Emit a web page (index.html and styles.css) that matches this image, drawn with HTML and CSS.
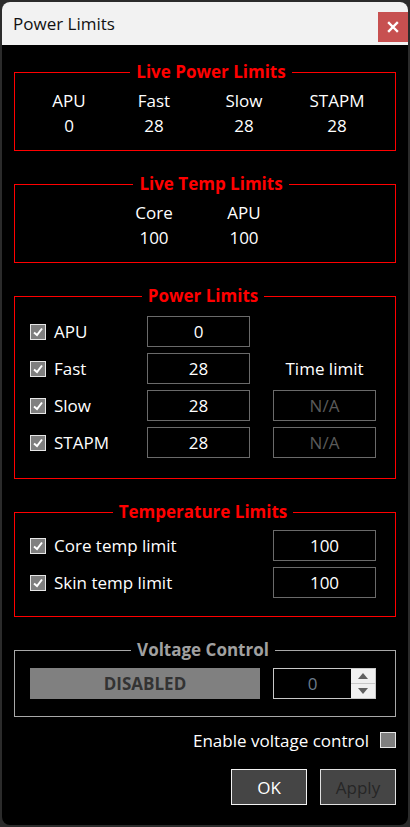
FILE: index.html
```html
<!DOCTYPE html>
<html lang="en">
<head>
  <meta charset="UTF-8" />
  <title>Power Limits</title>
  <meta name="viewport" content="width=device-width, initial-scale=1.0" />
  <link rel="stylesheet" href="styles.css">
</head>
<body>
  <div class="window">
    <div class="titlebar">
      <span class="title">Power Limits</span>
      <button class="close-btn" aria-label="Close">
        <svg width="12" height="12" viewBox="0 0 12 12">
          <path d="M2 2 L10 10 M10 2 L2 10" stroke="#fff" stroke-width="2.4" stroke-linecap="square" fill="none"/>
        </svg>
      </button>
    </div>

    <div class="content">
      <fieldset class="group live">
        <legend>Live Power Limits</legend>
        <div class="live-grid">
          <span>APU</span><span>Fast</span><span>Slow</span><span>STAPM</span>
          <span>0</span><span>28</span><span>28</span><span>28</span>
        </div>
      </fieldset>

      <fieldset class="group live">
        <legend>Live Temp Limits</legend>
        <div class="live-grid">
          <span class="col2">Core</span><span>APU</span>
          <span class="col2">100</span><span>100</span>
        </div>
      </fieldset>

      <fieldset class="group limits">
        <legend>Power Limits</legend>
        <div class="limits-grid">
          <label class="check"><span class="box"><svg width="14" height="14" viewBox="0 0 14 14"><path d="M3 7.5 L6 10 L11 3.5" stroke="#fff" stroke-width="2" fill="none"/></svg></span>APU</label>
          <div class="field">0</div>
          <div></div>

          <label class="check"><span class="box"><svg width="14" height="14" viewBox="0 0 14 14"><path d="M3 7.5 L6 10 L11 3.5" stroke="#fff" stroke-width="2" fill="none"/></svg></span>Fast</label>
          <div class="field">28</div>
          <div class="time-label">Time limit</div>

          <label class="check"><span class="box"><svg width="14" height="14" viewBox="0 0 14 14"><path d="M3 7.5 L6 10 L11 3.5" stroke="#fff" stroke-width="2" fill="none"/></svg></span>Slow</label>
          <div class="field">28</div>
          <div class="field off">N/A</div>

          <label class="check"><span class="box"><svg width="14" height="14" viewBox="0 0 14 14"><path d="M3 7.5 L6 10 L11 3.5" stroke="#fff" stroke-width="2" fill="none"/></svg></span>STAPM</label>
          <div class="field">28</div>
          <div class="field off">N/A</div>
        </div>
      </fieldset>

      <fieldset class="group temps">
        <legend>Temperature Limits</legend>
        <div class="temps-grid">
          <label class="check"><span class="box"><svg width="14" height="14" viewBox="0 0 14 14"><path d="M3 7.5 L6 10 L11 3.5" stroke="#fff" stroke-width="2" fill="none"/></svg></span>Core temp limit</label>
          <div class="field">100</div>
          <label class="check"><span class="box"><svg width="14" height="14" viewBox="0 0 14 14"><path d="M3 7.5 L6 10 L11 3.5" stroke="#fff" stroke-width="2" fill="none"/></svg></span>Skin temp limit</label>
          <div class="field">100</div>
        </div>
      </fieldset>

      <fieldset class="group voltage">
        <legend>Voltage Control</legend>
        <div class="voltage-row">
          <div class="disabled-bar">DISABLED</div>
          <div class="spin">
            <span class="spin-value">0</span>
            <span class="spin-btns">
              <span class="spin-btn"><svg width="10" height="6" viewBox="0 0 10 6"><path d="M0 6 L5 0 L10 6 Z" fill="#606060"/></svg></span>
              <span class="spin-btn"><svg width="10" height="6" viewBox="0 0 10 6"><path d="M0 0 L10 0 L5 6 Z" fill="#606060"/></svg></span>
            </span>
          </div>
        </div>
      </fieldset>

      <label class="enable-row">Enable voltage control<span class="box"></span></label>

      <div class="buttons">
        <button class="btn">OK</button>
        <button class="btn muted">Apply</button>
      </div>
    </div>
  </div>
</body>
</html>
```

FILE: styles.css
```css
body {
  margin: 0;
  background: #2b2b2b;
  font-family: "Open Sans", "Noto Sans", sans-serif;
  font-size: 17px;
  color: #fff;
}

.window {
  margin: 2px;
  height: 823px;
  border-radius: 8px;
  overflow: hidden;
  background: #000;
  display: flex;
  flex-direction: column;
}

.titlebar {
  height: 43px;
  background: #f2f2f2;
  display: flex;
  align-items: center;
  justify-content: space-between;
  padding-left: 11px;
}

.title {
  color: #111;
  font-size: 17px;
}

.close-btn {
  width: 30px;
  height: 30px;
  margin-top: 7px;
  margin-right: 0;
  border: none;
  padding: 0;
  background: #c75050;
  display: flex;
  align-items: center;
  justify-content: center;
}

.content {
  padding: 16px 12px 0;
  display: flex;
  flex-direction: column;
}

/* group boxes */
.group {
  margin: 0 0 22px;
  border: 1px solid #ff0000;
  min-inline-size: 0;
}

.group legend {
  margin: 0 auto;
  padding: 0 6px;
  font-weight: bold;
  line-height: 22px;
  color: #ff0000;
}

.live {
  padding: 5px 0 12px 12px;
}

.live-grid {
  display: grid;
  grid-template-columns: 84px 86px 94px 92px;
  grid-auto-rows: 25px;
  line-height: 25px;
  text-align: center;
}

.live-grid .col2 {
  grid-column: 2;
}

.limits {
  padding: 9px 19px 20px 15px;
}

.limits-grid {
  display: grid;
  grid-template-columns: 94px 103px 103px;
  grid-auto-rows: 31px;
  column-gap: 23px;
  row-gap: 6px;
}

.temps {
  padding: 7px 19px 18px 15px;
}

.temps-grid {
  display: grid;
  grid-template-columns: 1fr 103px;
  grid-auto-rows: 31px;
  row-gap: 6px;
}

.check {
  display: flex;
  align-items: center;
  gap: 8px;
}

.box {
  width: 14px;
  height: 14px;
  border: 1px solid #e6e6e6;
  background: #7f7f7f;
  display: flex;
  align-items: center;
  justify-content: center;
}

.field {
  border: 1px solid #6a6a6a;
  display: flex;
  align-items: center;
  justify-content: center;
}

.field.off {
  color: #5a5a5a;
}

.time-label {
  display: flex;
  align-items: center;
  justify-content: center;
}

/* voltage */
.voltage {
  border-color: #a8a8a8;
  padding: 7px 19px 17px 15px;
}

.voltage legend {
  color: #a0a0a0;
}

.voltage-row {
  display: flex;
  gap: 13px;
  height: 31px;
}

.disabled-bar {
  width: 230px;
  background: #808080;
  color: #333;
  font-weight: bold;
  display: flex;
  align-items: center;
  justify-content: center;
}

.spin {
  width: 101px;
  border: 1px solid #c8c8c8;
  display: flex;
}

.spin-value {
  flex: 1;
  display: flex;
  align-items: center;
  justify-content: center;
  color: #6b7a8a;
}

.spin-btns {
  width: 24px;
  display: flex;
  flex-direction: column;
  gap: 1px;
  background: #c8c8c8;
}

.spin-btn {
  flex: 1;
  background: #f0f0f0;
  display: flex;
  align-items: center;
  justify-content: center;
}

.enable-row {
  margin-top: -11px;
  height: 24px;
  display: flex;
  align-items: center;
  justify-content: flex-end;
  gap: 11px;
}

.buttons {
  margin-top: 17px;
  display: flex;
  justify-content: flex-end;
  gap: 13px;
}

.btn {
  width: 76px;
  height: 36px;
  border: 1px solid #f2f2f2;
  background: #454545;
  color: #fff;
  font-family: inherit;
  font-size: 17px;
  padding: 0;
}

.btn.muted {
  color: #262626;
  border-color: #e0e0e0;
}
```
